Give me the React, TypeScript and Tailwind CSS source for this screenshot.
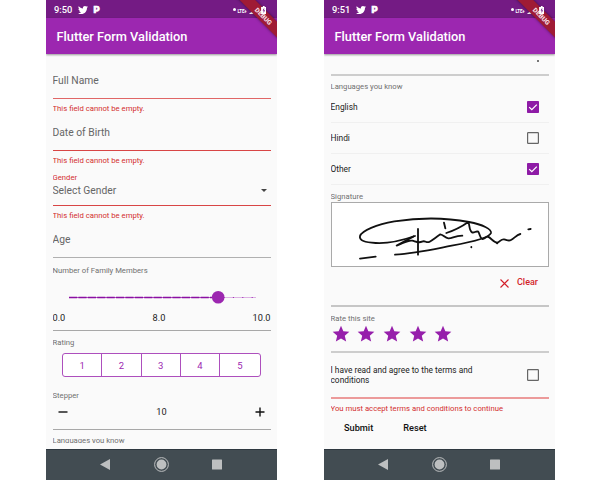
import React from "react";
import { FaTwitter } from "react-icons/fa";
import { MdStar } from "react-icons/md";

const ROBOTO = "font-['Roboto','Liberation_Sans',sans-serif]";

function StatusBar({ time }: { time: string }) {
  return (
    <div className="flex h-[18px] items-center bg-[#741b84] pt-px pl-2 text-white">
      <span className="w-[24px] text-[9.3px] leading-none font-medium">{time}</span>
      <FaTwitter className="size-[10px]" />
      <span className="ml-[5.5px] text-[9.5px] leading-none font-black [-webkit-text-stroke:0.7px_white]">P</span>
      <span className="ml-auto size-[2.5px] rounded-full bg-white" />
      <span className="mt-[5px] ml-[2px] w-[10px] text-[4.5px] leading-none font-bold tracking-[-0.15px]">LTE+</span>
      <svg viewBox="0 0 9 8" className="mt-[1px] ml-[1px] h-[8px] w-[9px]">
        <path d="M0 8 9 0V8Z" fill="#b98bc2" />
        <path d="M0 8 4 5V8Z" fill="#fff" />
      </svg>
      <svg viewBox="0 0 6 9" className="relative z-20 mr-[11px] ml-[3px] h-[8px] w-[5.5px]">
        <path d="M2 0h2v1h2v8H0V1h2Z" fill="#fff" />
        <path d="M3.6 2 1.7 5.2h1.1V8l1.7-3.3H3.4Z" fill="#741b84" />
      </svg>
    </div>
  );
}

function NavBar() {
  return (
    <div className="mt-auto h-[31px] border-t border-[#2e3840] bg-[#424c52]">
      <svg viewBox="0 0 231 30" className="h-[30px] w-full" fill="#bdbfc0">
        <path d="M54 14.5 64 9V20Z" />
        <circle cx="115.5" cy="14.5" r="6.9" fill="none" stroke="#bdbfc0" strokeWidth="1" />
        <circle cx="115.5" cy="14.5" r="4.9" />
        <rect x="166" y="9.5" width="10" height="10" rx="0.5" />
      </svg>
    </div>
  );
}

function Phone({ time, children }: { time: string; children: React.ReactNode }) {
  return (
    <section className="relative flex h-[480px] w-[231px] flex-col overflow-hidden bg-[#fafafa] text-[#555]">
      <StatusBar time={time} />
      <header className="z-10 flex h-[36px] items-center bg-[#9c27b0] pt-[2px] pl-[10.5px] text-[12.8px] font-medium text-white shadow-[0_1px_2px_rgba(0,0,0,0.4)]">
        Flutter Form Validation
      </header>
      <div className="mr-[6.5px] ml-[6.5px] flex h-[389px] flex-col overflow-hidden">{children}</div>
      <NavBar />
      <div className="absolute top-[8.5px] left-[174px] z-10 h-[10.5px] w-[84px] rotate-45 bg-[#9f1b35] pl-[5px] text-center text-[6.6px] leading-[12px] font-black text-[#f3dbe1] shadow-[0_0_3px_rgba(0,0,0,0.5)]">
        DEBUG
      </div>
    </section>
  );
}

function Field({ label, className }: { label: string; className: string }) {
  return <div className={`h-4 shrink-0 pt-px text-[10.3px] leading-4 text-[#666] ${className}`}>{label}</div>;
}

function Caption({ children, className }: { children: string; className: string }) {
  return <div className={`h-3 shrink-0 pt-px text-[7.7px] leading-3 text-[#707070] ${className}`}>{children}</div>;
}

function ErrorText({ children = "This field cannot be empty." }: { children?: string }) {
  return <div className="mt-[3px] h-3 shrink-0 pt-px text-[7.72px] leading-3 text-[#d32f2f]">{children}</div>;
}

function Line({ className }: { className: string }) {
  return <div className={`shrink-0 ${className}`} />;
}

function Slider() {
  return (
    <svg viewBox="0 0 218 14" className="mt-[14px] h-[14px] w-full shrink-0">
      <path d="M16 7.5H160" stroke="#b55fc3" strokeWidth="1.1" />
      <path d="M16 7.5H160" stroke="#8a0fa2" strokeWidth="1.6" strokeDasharray="8.2 1.2" />
      <path d="M171 7.5H203" stroke="#d9aae1" strokeWidth="0.9" />
      <path d="M171 7.5H204" stroke="#9c27b0" strokeWidth="1" strokeDasharray="1 8.4" strokeDashoffset="0.5" />
      <circle cx="165.2" cy="7.3" r="6.3" fill="#9c27b0" />
    </svg>
  );
}

function Checkbox({ checked }: { checked: boolean }) {
  return (
    <svg viewBox="0 0 12 12" className="mr-[9.5px] size-[12px]">
      {checked ? (
        <>
          <rect width="12" height="12" rx="0.8" fill="#8e1ba6" />
          <path d="M2.2 6.1 4.8 8.6 9.8 3.6" fill="none" stroke="#fff" strokeWidth="1.3" />
        </>
      ) : (
        <rect x="0.6" y="0.6" width="10.8" height="10.8" rx="0.6" fill="none" stroke="#666" strokeWidth="1.2" />
      )}
    </svg>
  );
}

function LanguageRow({ name, checked, className }: { name: string; checked: boolean; className: string }) {
  return (
    <div className={`flex shrink-0 items-center justify-between border-b border-[#f0f0f0] text-[8.4px] text-[#222] ${className}`}>
      {name}
      <Checkbox checked={checked} />
    </div>
  );
}

function Signature() {
  return (
    <div className="h-[65px] shrink-0 border border-[#aaa] bg-white">
      <svg viewBox="20 23 648 192" className="h-[64px] w-full" fill="none" stroke="#111" strokeWidth="5.5" strokeLinecap="round" strokeLinejoin="round">
        <path d="M269 122C220 139 184 145 151 143C119 141 101 136 104 122C109 106 154 87 207 78C286 66 369 68 431 80C472 88 499 101 497 113C493 126 445 139 379 151C322 162 270 174 209 178" />
        <path d="M265 123 214 151C235 143 250 133 261 136S280 144 290 139S303 145 313 139S330 127 345 117C355 118 358 128 369 129S387 122 411 121" />
        <path d="M278 101V178M356 82 360 99M363 113C391 104 409 94 429 80C434 92 431 106 440 111C447 114 451 106 459 109C464 116 463 128 471 131C478 132 479 125 488 124C498 129 506 142 516 142C525 139 526 131 536 132C548 135 550 138 557 134C567 129 573 119 585 116" />
        <path d="M104 190 151 184M438 155V156M609 102 616 101M516 144H515" />
      </svg>
    </div>
  );
}

function FirstForm() {
  return (
    <>
      <Field label="Full Name" className="mt-[18px]" />
      <Line className="mt-[10px] h-px bg-[#e06666]" />
      <ErrorText />
      <Field label="Date of Birth" className="mt-[10px]" />
      <Line className="mt-[10px] h-px bg-[#d84545]" />
      <ErrorText />
      <div className="mt-[5px] h-3 shrink-0 pt-px text-[7.7px] leading-3 text-[#d32f2f]">Gender</div>
      <div className="flex h-[15px] shrink-0 items-center justify-between text-[10.3px] text-[#666]">
        Select Gender
        <svg viewBox="0 0 6 3" className="mr-[4px] h-[3px] w-[6px]"><path d="M0 0H6L3 3Z" fill="#444" /></svg>
      </div>
      <Line className="mt-[7px] h-px bg-[#d84545]" />
      <ErrorText />
      <Field label="Age" className="mt-[10px]" />
      <Line className="mt-[10px] h-px bg-[#b0b0b0]" />
      <Caption className="mt-[6px]">Number of Family Members</Caption>
      <Slider />
      <div className="mt-[7px] grid h-[14px] shrink-0 grid-cols-3 items-center text-[9.2px] text-[#222]">
        <span>0.0</span>
        <span className="pr-[5px] text-center">8.0</span>
        <span className="text-right">10.0</span>
      </div>
      <Line className="mt-[5px] h-px bg-[#a8a8a8]" />
      <Caption className="mt-[5px]">Rating</Caption>
      <div className="mt-[5px] mr-[10px] ml-[9.5px] grid h-[24px] shrink-0 grid-cols-5 divide-x divide-[#ad4fbd] rounded-[3px] border border-[#ad4fbd] bg-white text-center text-[9.5px] leading-[23px] text-[#9c27b0]">
        {[1, 2, 3, 4, 5].map((n) => (
          <span key={n}>{n}</span>
        ))}
      </div>
      <Caption className="mt-[12px]">Stepper</Caption>
      <div className="mt-[3px] flex h-[15px] shrink-0 items-center justify-between text-[9.2px] text-[#222]">
        <svg viewBox="0 0 10 10" className="ml-[5px] size-[10px]"><path d="M.5 5H9.5" stroke="#111" strokeWidth="1.4" /></svg>
        <span>10</span>
        <svg viewBox="0 0 10 10" className="mr-[5px] size-[10px]"><path d="M.5 5H9.5M5 .5V9.5" stroke="#111" strokeWidth="1.4" /></svg>
      </div>
      <Line className="mt-[10px] h-px bg-[#a8a8a8]" />
      <Caption className="mt-[4px]">Languages you know</Caption>
    </>
  );
}

function SecondForm() {
  return (
    <>
      <div className="mt-[6px] mr-[10px] size-[2px] shrink-0 self-end bg-[#777]" />
      <Line className="mt-[12px] h-[2px] bg-[#cdcdcd]" />
      <Caption className="mt-[4px]">Languages you know</Caption>
      <LanguageRow name="English" checked className="h-[31px]" />
      <LanguageRow name="Hindi" checked={false} className="h-[31px]" />
      <LanguageRow name="Other" checked className="h-[31px]" />
      <Caption className="mt-[5px]">Signature</Caption>
      <Signature />
      <div className="mt-[9px] flex h-[14px] shrink-0 items-center justify-end gap-[8px] pr-[10.5px] text-[9px] font-medium text-[#d31f2a]">
        <svg viewBox="0 0 9 9" className="size-[9px]"><path d="M.5.5 8.5 8.5M8.5.5.5 8.5" stroke="#d31f2a" strokeWidth="1.1" /></svg>
        <span>Clear</span>
      </div>
      <Line className="mt-[15px] h-[2px] bg-[#c6c6c6]" />
      <Caption className="mt-[5px]">Rate this site</Caption>
      <div className="flex h-[20px] shrink-0 gap-[5.7px]">
        {[1, 2, 3, 4, 5].map((n) => (
          <MdStar key={n} className="size-[20px] text-[#961fab]" />
        ))}
      </div>
      <Line className="mt-[7px] h-[2px] bg-[#cdcdcd]" />
      <div className="mt-[12px] flex h-[20px] shrink-0 items-center justify-between text-[8.35px] leading-[10px] text-[#222]">
        <span>I have read and agree to the terms and<br />conditions</span>
        <Checkbox checked={false} />
      </div>
      <Line className="mt-[12px] h-[2px] bg-[#ec9a9a]" />
      <ErrorText>You must accept terms and conditions to continue</ErrorText>
      <div className="mt-[7px] flex h-[14px] shrink-0 items-center gap-[30px] pl-[13.5px] text-[9.2px] font-medium text-[#111]">
        <span>Submit</span>
        <span>Reset</span>
      </div>
    </>
  );
}

export default function App() {
  return (
    <main className={`flex h-[480px] w-[600px] gap-[47px] overflow-hidden bg-white pl-[46px] ${ROBOTO}`}>
      <Phone time="9:50"><FirstForm /></Phone>
      <Phone time="9:51"><SecondForm /></Phone>
    </main>
  );
}
